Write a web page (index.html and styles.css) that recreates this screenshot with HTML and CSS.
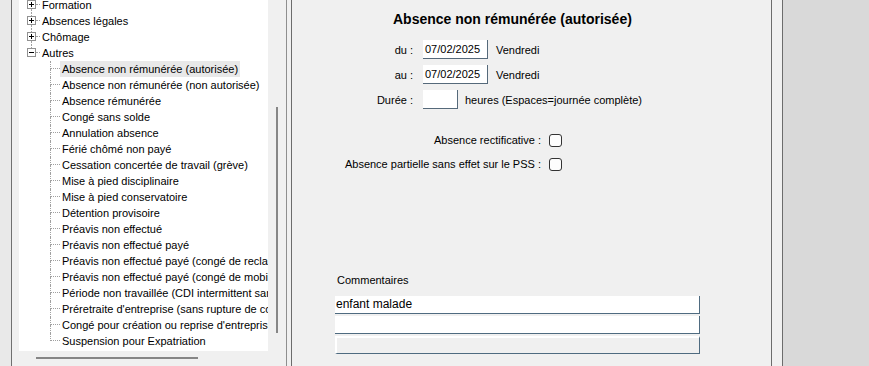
FILE: index.html
```html
<!DOCTYPE html>
<html lang="fr">
<head>
  <meta charset="UTF-8">
  <meta name="viewport" content="width=device-width, initial-scale=1.0">
  <title>Absence non rémunérée (autorisée)</title>
  <link rel="stylesheet" href="styles.css">
</head>
<body>

  <div class="gutter"></div>

  <!-- Tree of absence types -->
  <div class="tree-pane">
    <div class="tree-top">
      <div class="tree">
        <ul class="tree-list">
          <li class="node">
            <span class="node-cell"><svg width="9" height="9"><rect x=".5" y=".5" width="8" height="8" fill="#fff" stroke="#919191"/><path d="M2 4.5h5M4.5 2v5" stroke="#000"/></svg></span>
            <span class="dash"></span><span class="label">Formation</span>
          </li>
          <li class="node">
            <span class="node-cell"><svg width="9" height="9"><rect x=".5" y=".5" width="8" height="8" fill="#fff" stroke="#919191"/><path d="M2 4.5h5M4.5 2v5" stroke="#000"/></svg></span>
            <span class="dash"></span><span class="label">Absences légales</span>
          </li>
          <li class="node">
            <span class="node-cell"><svg width="9" height="9"><rect x=".5" y=".5" width="8" height="8" fill="#fff" stroke="#919191"/><path d="M2 4.5h5M4.5 2v5" stroke="#000"/></svg></span>
            <span class="dash"></span><span class="label">Chômage</span>
          </li>
          <li class="node last">
            <span class="node-cell"><svg width="9" height="9"><rect x=".5" y=".5" width="8" height="8" fill="#fff" stroke="#919191"/><path d="M2 4.5h5" stroke="#000"/></svg></span>
            <span class="dash"></span><span class="label">Autres</span>
          </li>
          <li class="leaf"><span class="branch"></span><span class="label selected">Absence non rémunérée (autorisée)</span></li>
          <li class="leaf"><span class="branch"></span><span class="label">Absence non rémunérée (non autorisée)</span></li>
          <li class="leaf"><span class="branch"></span><span class="label">Absence rémunérée</span></li>
          <li class="leaf"><span class="branch"></span><span class="label">Congé sans solde</span></li>
          <li class="leaf"><span class="branch"></span><span class="label">Annulation absence</span></li>
          <li class="leaf"><span class="branch"></span><span class="label">Férié chômé non payé</span></li>
          <li class="leaf"><span class="branch"></span><span class="label">Cessation concertée de travail (grève)</span></li>
          <li class="leaf"><span class="branch"></span><span class="label">Mise à pied disciplinaire</span></li>
          <li class="leaf"><span class="branch"></span><span class="label">Mise à pied conservatoire</span></li>
          <li class="leaf"><span class="branch"></span><span class="label">Détention provisoire</span></li>
          <li class="leaf"><span class="branch"></span><span class="label">Préavis non effectué</span></li>
          <li class="leaf"><span class="branch"></span><span class="label">Préavis non effectué payé</span></li>
          <li class="leaf"><span class="branch"></span><span class="label">Préavis non effectué payé (congé de reclas</span></li>
          <li class="leaf"><span class="branch"></span><span class="label">Préavis non effectué payé (congé de mobili</span></li>
          <li class="leaf"><span class="branch"></span><span class="label">Période non travaillée (CDI intermittent san</span></li>
          <li class="leaf"><span class="branch"></span><span class="label">Préretraite d'entreprise (sans rupture de co</span></li>
          <li class="leaf"><span class="branch"></span><span class="label">Congé pour création ou reprise d'entreprise</span></li>
          <li class="leaf last"><span class="branch"></span><span class="label">Suspension pour Expatriation</span></li>
        </ul>
      </div>
      <div class="vscroll"><div class="vthumb"></div></div>
    </div>
    <div class="hscroll"><div class="hthumb"></div></div>
  </div>

  <div class="splitter"></div>

  <!-- Absence form -->
  <div class="main">
    <div class="title">Absence non rémunérée (autorisée)</div>

    <div class="field first">
      <span class="field-label">du :</span>
      <span class="input date">07/02/2025</span>
      <span class="after">Vendredi</span>
    </div>
    <div class="field">
      <span class="field-label">au :</span>
      <span class="input date">07/02/2025</span>
      <span class="after">Vendredi</span>
    </div>
    <div class="field">
      <span class="field-label">Durée :</span>
      <span class="input hours"></span>
      <span class="after short">heures (Espaces=journée complète)</span>
    </div>

    <div class="check-row first">
      <span class="check-label">Absence rectificative :</span>
      <span class="checkbox"></span>
    </div>
    <div class="check-row">
      <span class="check-label">Absence partielle sans effet sur le PSS :</span>
      <span class="checkbox"></span>
    </div>

    <div class="comments-title">Commentaires</div>
    <div class="comments">
      <div class="comment-line">enfant malade</div>
      <div class="comment-line"></div>
      <div class="comment-line disabled"></div>
    </div>
  </div>

  <div class="right-gap"></div>
  <div class="rest"></div>

</body>
</html>
```

FILE: styles.css
```css
/* General */
body {
  display: flex;
  height: 366px;
  margin: 0;
  background-color: #f0f0f0;
  font-family: "Liberation Sans", Arial, sans-serif;
  font-size: 11px;
  color: #000;
  overflow: hidden;
}

.gutter {
  flex: 0 0 11px;
  background-color: #e9e9e9;
}

/* Tree pane */
.tree-pane {
  flex: 0 0 274px;
  display: flex;
  flex-direction: column;
  border-left: 1px solid #707070;
  border-right: 1px solid #8e8e8e;
}

.tree-top {
  display: flex;
  height: 351px;
}

.tree {
  flex: 0 0 249px;
  margin-left: 7px;
  background: #fff;
  overflow: hidden;
}

.tree-list {
  list-style: none;
  margin: -3px 0 0 0;
  padding: 0;
}

.tree-list li {
  display: flex;
  height: 16px;
  line-height: 16px;
  white-space: nowrap;
}

.node-cell {
  display: flex;
  flex-direction: column;
  flex: 0 0 9px;
  margin-left: 8px;
}

.node-cell::before,
.node-cell::after {
  content: "";
  margin-left: 4px;
  border-left: 1px dotted #a0a0a0;
}

.node-cell::before {
  height: 3px;
}

.node-cell::after {
  flex: 1;
}

.node-cell svg {
  display: block;
  flex: 0 0 9px;
}

.node.last .node-cell::after {
  border-left: none;
}

.dash {
  flex: 0 0 4px;
  height: 8px;
  border-bottom: 1px dotted #a0a0a0;
  box-sizing: border-box;
}

.branch {
  display: flex;
  flex-direction: column;
  flex: 0 0 10px;
  margin-left: 31px;
}

.branch::before {
  content: "";
  height: 8px;
  border-left: 1px dotted #a0a0a0;
  border-bottom: 1px dotted #a0a0a0;
  box-sizing: border-box;
}

.branch::after {
  content: "";
  flex: 1;
  border-left: 1px dotted #a0a0a0;
}

.leaf.last .branch::after {
  border-left: none;
}

.label {
  flex: 0 0 auto;
  padding: 0 2px;
}

.label.selected {
  background-color: #e8e8e8;
}

.vscroll {
  flex: 0 0 18px;
  padding-top: 107px;
}

.vthumb {
  width: 2px;
  height: 226px;
  margin-left: 8px;
  background: #868686;
}

.hscroll {
  flex: 1;
  padding-top: 6px;
}

.hthumb {
  width: 162px;
  height: 2px;
  margin-left: 24px;
  background: #868686;
}

.splitter {
  flex: 0 0 4px;
}

/* Form panel */
.main {
  flex: 0 0 479px;
  border-left: 1px solid #6c6c6c;
  border-right: 1px solid #6c6c6c;
  padding-top: 11px;
}

.title {
  margin-left: 101px;
  font-size: 14px;
  font-weight: bold;
  line-height: 16px;
}

.field {
  display: flex;
  align-items: center;
  height: 19px;
  margin-top: 6px;
}

.field.first {
  margin-top: 13px;
}

.field-label {
  width: 121px;
  text-align: right;
}

.input {
  box-sizing: border-box;
  height: 19px;
  margin-left: 10px;
  padding-left: 2px;
  line-height: 18px;
  background: #fff;
  border-right: 1px solid #55697a;
  border-bottom: 1px solid #55697a;
}

.input.date {
  width: 65px;
}

.input.hours {
  width: 35px;
}

.after {
  margin-left: 8px;
}

.after.short {
  margin-left: 7px;
}

.check-row {
  display: flex;
  align-items: center;
  height: 16px;
  margin-top: 8px;
}

.check-row.first {
  margin-top: 23px;
}

.check-label {
  width: 249px;
  text-align: right;
}

.checkbox {
  box-sizing: border-box;
  width: 13px;
  height: 13px;
  margin-left: 8px;
  border: 1px solid #333;
  border-radius: 3px;
  background: #fdfdfd;
}

.comments-title {
  margin: 100px 0 0 45px;
  line-height: 16px;
}

.comments {
  display: flex;
  flex-direction: column;
  gap: 2px;
  width: 365px;
  margin: 8px 0 0 43px;
}

.comment-line {
  box-sizing: border-box;
  height: 18px;
  padding-left: 1px;
  line-height: 17px;
  font-size: 12px;
  background: #fff;
  border-right: 1px solid #4f6b80;
  border-bottom: 1px solid #4f6b80;
}

.comment-line.disabled {
  background: #f0f0f0;
  border-top: 2px solid #fff;
  border-left: 2px solid #fff;
}

.right-gap {
  flex: 0 0 10px;
  border-right: 1px solid #6c6c6c;
}

.rest {
  flex: 1;
  background-color: #d9d9d9;
}
```
